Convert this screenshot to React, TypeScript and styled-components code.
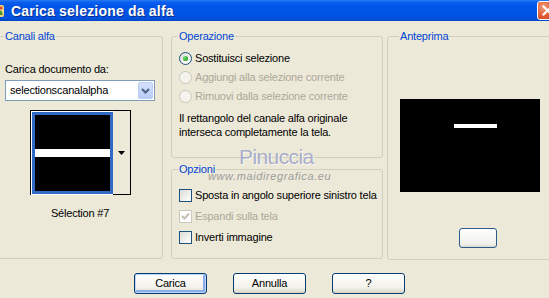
import React from "react";
import styled, { createGlobalStyle } from "styled-components";

const GlobalStyle = createGlobalStyle`
  html, body {
    margin: 0;
    padding: 0;
    background: #ece9d8;
  }
  body {
    font-family: "Liberation Sans", Arial, sans-serif;
  }
`;

function App() {
  return (
    <Window>
      <GlobalStyle />
      <TitleBar>
        <TitleIcon viewBox="0 0 16 16">
          <rect x="1" y="2" width="14" height="12" rx="2" fill="#f4d27a" />
          <path d="M3 12 L7 5 L10 10 L12 7 L14 12 Z" fill="#3c9a3a" />
          <circle cx="12" cy="5" r="1.6" fill="#d8452c" />
        </TitleIcon>
        <TitleText>Carica selezione da alfa</TitleText>
        <CloseButton>
          <svg width="11" height="11" viewBox="0 0 11 11">
            <path d="M1.5 1.5 L9.5 9.5 M9.5 1.5 L1.5 9.5" stroke="#fff" strokeWidth="2" strokeLinecap="square" />
          </svg>
        </CloseButton>
      </TitleBar>

      <Body>
        <Panels>
          <ChannelsGroup>
            <Legend>Canali alfa</Legend>
            <FieldLabel>Carica documento da:</FieldLabel>
            <Combo>
              <ComboValue>selectionscanalalpha</ComboValue>
              <ComboButton>
                <svg width="9" height="6" viewBox="0 0 9 6">
                  <path d="M1 1 L4.5 4.5 L8 1" stroke="#4d6185" strokeWidth="2" fill="none" />
                </svg>
              </ComboButton>
            </Combo>
            <ThumbFrame>
              <ThumbCell>
                <ThumbImage>
                  <ThumbStripe />
                </ThumbImage>
              </ThumbCell>
              <ThumbArrow>
                <svg width="7" height="4" viewBox="0 0 7 4">
                  <path d="M0 0 H7 L3.5 4 Z" fill="#000" />
                </svg>
              </ThumbArrow>
            </ThumbFrame>
            <Caption>Sélection #7</Caption>
          </ChannelsGroup>

          <MiddleColumn>
            <OperationGroup>
              <Legend>Operazione</Legend>
              <OptionRow $h={19}>
                <Radio $checked />
                <OptionText>Sostituisci selezione</OptionText>
              </OptionRow>
              <OptionRow $h={19}>
                <Radio $disabled />
                <OptionText $disabled>Aggiungi alla selezione corrente</OptionText>
              </OptionRow>
              <OptionRow $h={19}>
                <Radio $disabled />
                <OptionText $disabled>Rimuovi dalla selezione corrente</OptionText>
              </OptionRow>
              <Note>
                Il rettangolo del canale alfa originale
                <br />
                interseca completamente la tela.
              </Note>
            </OperationGroup>

            <OptionsGroup>
              <Legend>Opzioni</Legend>
              <OptionRow $h={21}>
                <Checkbox />
                <OptionText>Sposta in angolo superiore sinistro tela</OptionText>
              </OptionRow>
              <OptionRow $h={21}>
                <Checkbox $disabled>
                  <svg width="9" height="9" viewBox="0 0 9 9">
                    <path d="M1 4 L3.5 6.5 L8 1.5" stroke="#c4c2b5" strokeWidth="2" fill="none" />
                  </svg>
                </Checkbox>
                <OptionText $disabled>Espandi sulla tela</OptionText>
              </OptionRow>
              <OptionRow $h={21}>
                <Checkbox />
                <OptionText>Inverti immagine</OptionText>
              </OptionRow>
            </OptionsGroup>
          </MiddleColumn>

          <PreviewGroup>
            <Legend>Anteprima</Legend>
            <PreviewCanvas>
              <PreviewStripe />
            </PreviewCanvas>
            <PreviewButton />
          </PreviewGroup>
        </Panels>

        <ButtonRow>
          <DialogButton $default>Carica</DialogButton>
          <DialogButton>Annulla</DialogButton>
          <DialogButton>?</DialogButton>
        </ButtonRow>
      </Body>

      <WatermarkName>Pinuccia</WatermarkName>
      <WatermarkSite>www.maidiregrafica.eu</WatermarkSite>
    </Window>
  );
}

export default App;

const Window = styled.div`
  position: relative;
  width: 549px;
  height: 298px;
  overflow: hidden;
  background: #ece9d8;
  display: flex;
  flex-direction: column;
  font-size: 11px;
  letter-spacing: -0.2px;
  color: #000;
`;

const TitleBar = styled.div`
  flex: none;
  height: 21px;
  display: flex;
  align-items: center;
  background: linear-gradient(
    #2a7bf5 0%,
    #0a5fef 10%,
    #0055e8 30%,
    #0054e3 70%,
    #0050dc 90%,
    #0046c4 100%
  );
`;

const TitleIcon = styled.svg`
  flex: none;
  width: 16px;
  height: 16px;
  margin-left: -11px;
`;

const TitleText = styled.div`
  margin-left: 6px;
  color: #fff;
  font-weight: bold;
  font-size: 14px;
  letter-spacing: 0.2px;
  text-shadow: 1px 1px 0 #0a2a8c;
`;

const CloseButton = styled.div`
  flex: none;
  box-sizing: border-box;
  width: 21px;
  height: 19px;
  margin-left: auto;
  margin-right: -9px;
  border: 1px solid #fff;
  border-radius: 3px;
  background: radial-gradient(circle at 30% 30%, #f0a080 0%, #e2603a 45%, #c23c16 100%);
  display: flex;
  align-items: center;
  justify-content: center;
`;

const Body = styled.div`
  display: flex;
  flex-direction: column;
  padding-top: 9px;
`;

const Panels = styled.div`
  display: flex;
  align-items: flex-start;
`;

const Group = styled.fieldset`
  flex: none;
  box-sizing: border-box;
  margin: 0;
  padding: 0 7px;
  min-width: 0;
  border: 1px solid #d0d0bf;
  border-radius: 3px;
`;

const Legend = styled.legend`
  padding: 0 1px;
  margin-left: -1px;
  color: #0046d5;
  font-size: 11px;
  line-height: 13px;
`;

const ChannelsGroup = styled(Group)`
  width: 166px;
  height: 229px;
  margin-left: -3px;
`;

const FieldLabel = styled.div`
  margin-top: 20px;
  line-height: 13px;
`;

const Combo = styled.div`
  box-sizing: border-box;
  width: 150px;
  height: 21px;
  margin-top: 4px;
  border: 1px solid #7f9db9;
  background: #fff;
  display: flex;
  align-items: center;
  padding: 0 1px 0 4px;
`;

const ComboValue = styled.span`
  flex: 1;
  line-height: 13px;
`;

const ComboButton = styled.div`
  box-sizing: border-box;
  width: 15px;
  height: 17px;
  border: 1px solid #b9cdf6;
  border-radius: 2px;
  background: linear-gradient(#d6e1fb, #b8cbf8);
  display: flex;
  align-items: center;
  justify-content: center;
`;

const ThumbFrame = styled.div`
  display: flex;
  width: fit-content;
  margin: 9px auto 0;
  border-top: 1px solid #000;
  border-left: 1px solid #000;
`;

const ThumbCell = styled.div`
  padding: 1px 0 1px 1px;
  background: #fff;
`;

const ThumbImage = styled.div`
  box-sizing: content-box;
  width: 75px;
  height: 42px;
  padding-top: 34px;
  border: 3px solid #316ac5;
  background: #000;
  display: flex;
  flex-direction: column;
`;

const ThumbStripe = styled.div`
  height: 8px;
  background: #fff;
`;

const ThumbArrow = styled.div`
  box-sizing: border-box;
  width: 18px;
  height: 84px;
  border-right: 1px solid #000;
  border-bottom: 1px solid #000;
  display: flex;
  align-items: center;
  justify-content: center;
`;

const Caption = styled.div`
  margin-top: 12px;
  text-align: center;
  line-height: 13px;
`;

const MiddleColumn = styled.div`
  flex: none;
  width: 212px;
  margin-left: 8px;
  display: flex;
  flex-direction: column;
  gap: 5px;
`;

const OperationGroup = styled(Group)`
  height: 128px;
  padding-top: 6px;
`;

const OptionsGroup = styled(Group)`
  height: 96px;
  padding-top: 9px;
`;

const OptionRow = styled.div<{ $h: number }>`
  height: ${(p) => p.$h}px;
  display: flex;
  align-items: center;
  gap: 3px;
`;

const OptionText = styled.span<{ $disabled?: boolean }>`
  color: ${(p) => (p.$disabled ? "#aca899" : "#000")};
  white-space: nowrap;
  line-height: 13px;
`;

const Radio = styled.span<{ $checked?: boolean; $disabled?: boolean }>`
  flex: none;
  box-sizing: border-box;
  width: 13px;
  height: 13px;
  border-radius: 50%;
  border: 1px solid ${(p) => (p.$disabled ? "#cac8bb" : "#1c5180")};
  background: ${(p) =>
    p.$disabled ? "#f4f3ee" : "linear-gradient(135deg, #dcdcd7, #ffffff)"};
  display: flex;
  align-items: center;
  justify-content: center;

  &::after {
    content: "";
    display: ${(p) => (p.$checked ? "block" : "none")};
    width: 5px;
    height: 5px;
    border-radius: 50%;
    background: radial-gradient(circle at 35% 35%, #7ae07a, #21a121 70%);
  }
`;

const Checkbox = styled.span<{ $disabled?: boolean }>`
  flex: none;
  box-sizing: border-box;
  width: 13px;
  height: 13px;
  border: 1px solid ${(p) => (p.$disabled ? "#cac8bb" : "#1c5180")};
  background: ${(p) =>
    p.$disabled ? "#fff" : "linear-gradient(135deg, #dcdcd7, #ffffff)"};
  display: flex;
  align-items: center;
  justify-content: center;
`;

const Note = styled.div`
  margin-top: 5px;
  line-height: 14px;
`;

const PreviewGroup = styled(Group)`
  width: 175px;
  height: 230px;
  margin-left: 4px;
  padding: 0 0 0 12px;
`;

const PreviewCanvas = styled.div`
  box-sizing: border-box;
  width: 140px;
  height: 93px;
  margin-top: 56px;
  padding: 25px 0 0 54px;
  background: #000;
`;

const PreviewStripe = styled.div`
  width: 43px;
  height: 4px;
  background: #fff;
`;

const PreviewButton = styled.div`
  box-sizing: border-box;
  width: 38px;
  height: 20px;
  margin: 36px 0 0 59px;
  border: 1px solid #2c5b8e;
  border-radius: 3px;
  background: linear-gradient(#ffffff, #f0f0ea 85%, #d8d4c8);
`;

const ButtonRow = styled.div`
  display: flex;
  gap: 26px;
  margin-top: 13px;
  padding-left: 134px;
`;

const DialogButton = styled.div<{ $default?: boolean }>`
  flex: none;
  box-sizing: border-box;
  width: 73px;
  height: 21px;
  border: 1px solid #003c74;
  border-radius: 3px;
  background: linear-gradient(#ffffff, #f3f2ec 70%, #e3e0d4 90%, #d6d0c5);
  box-shadow: ${(p) =>
    p.$default ? "inset 0 0 0 1px #c2d5f8, inset -1px -1px 0 2px #89adee" : "none"};
  display: flex;
  align-items: center;
  justify-content: center;
  line-height: 13px;
`;

const WatermarkName = styled.div`
  position: absolute;
  left: 239px;
  top: 146px;
  font-family: "Liberation Sans", Arial, sans-serif;
  font-size: 21px;
  line-height: 22px;
  letter-spacing: -0.6px;
  color: #a9aec8;
  text-shadow: 1px 1px 0 rgba(255, 255, 255, 0.7);
`;

const WatermarkSite = styled.div`
  position: absolute;
  left: 208px;
  top: 170px;
  font-family: "Liberation Sans", Arial, sans-serif;
  font-style: italic;
  font-size: 11px;
  line-height: 13px;
  letter-spacing: 0.6px;
  color: #9c9c9c;
`;
